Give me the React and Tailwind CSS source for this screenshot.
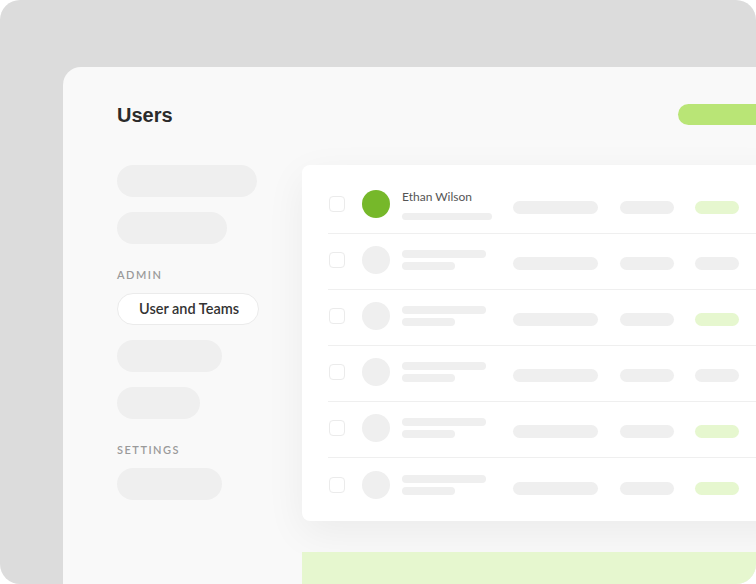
const rows = [
  { name: 'Ethan Wilson', active: true, status: 'green' },
  { status: 'gray' },
  { status: 'green' },
  { status: 'gray' },
  { status: 'green' },
  { status: 'green' },
];

function Pill({ w }) {
  return <div className={`h-[32px] rounded-full bg-[#efefef] ${w}`} />;
}

function Label({ children }) {
  return (
    <div className="mt-[23px] mb-[10px] h-[16px] text-[11px] leading-[16px] font-semibold tracking-[1.5px] text-[#9a9a9a]">
      {children}
    </div>
  );
}

function Row({ row, last }) {
  return (
    <div className={`flex items-center h-[56px] pb-[3px] ${last ? '' : 'border-b border-[#efefef]'}`}>
      <div className="ml-[1px] w-[16px] h-[16px] rounded-[4px] border border-[#ebebeb] bg-white shrink-0" />
      <div
        className={`ml-[17px] w-[28px] h-[28px] rounded-full shrink-0 ${row.active ? 'bg-[#76b82a]' : 'bg-[#efefef]'}`}
      />
      <div className="ml-[12px] w-[111px] shrink-0">
        {row.name ? (
          <>
            <div className="text-[12px] leading-[16px] text-[#555]">{row.name}</div>
            <div className="mt-[8px] w-[90px] h-[7px] rounded-full bg-[#efefef]" />
          </>
        ) : (
          <>
            <div className="w-[84px] h-[8px] rounded-full bg-[#efefef]" />
            <div className="mt-[4px] w-[53px] h-[8px] rounded-full bg-[#efefef]" />
          </>
        )}
      </div>
      <div className="flex items-center mt-[7px]">
        <div className="w-[85px] h-[13px] rounded-full bg-[#efefef]" />
        <div className="ml-[22px] w-[54px] h-[13px] rounded-full bg-[#efefef]" />
        <div
          className={`ml-[21px] w-[44px] h-[13px] rounded-full ${row.status === 'green' ? 'bg-[#e6f7cf]' : 'bg-[#efefef]'}`}
        />
      </div>
    </div>
  );
}

export default function App() {
  return (
    <div
      className="w-[756px] h-[584px] bg-[#dcdcdc] rounded-[20px] overflow-hidden flex pl-[63px] pt-[67px]"
      style={{ fontFamily: 'Lato, "Noto Sans", sans-serif' }}
    >
      <div className="flex-1 bg-[#f9f9f9] rounded-tl-[18px] pl-[54px] pt-[34px]">
        {/* header */}
        <div className="flex items-center justify-between h-[28px]">
          <h1
            className="text-[20px] leading-[28px] font-bold text-[#2b2b2b]"
            style={{ fontFamily: '"Liberation Sans", Arial, sans-serif' }}
          >
            Users
          </h1>
          <div className="w-[108px] h-[21px] rounded-full bg-[#b9e576] -mr-[30px] -mt-[1px]" />
        </div>

        <div className="flex mt-[36px]">
          {/* sidebar */}
          <div className="w-[185px] shrink-0 flex flex-col">
            <Pill w="w-[140px]" />
            <div className="mt-[15px]"><Pill w="w-[110px]" /></div>
            <Label>ADMIN</Label>
            <div className="w-[142px] h-[32px] rounded-full bg-white border border-[#ebebeb] flex items-center pl-[21px] text-[14.5px] font-semibold text-[#333]">
              User and Teams
            </div>
            <div className="mt-[15px]"><Pill w="w-[105px]" /></div>
            <div className="mt-[15px]"><Pill w="w-[83px]" /></div>
            <Label>SETTINGS</Label>
            <Pill w="w-[105px]" />
          </div>

          {/* main */}
          <div className="flex-1 min-w-0">
            <div className="bg-white rounded-[8px] -mr-[40px] px-[26px] pt-[13px] pb-[7px] shadow-[0_12px_40px_rgba(0,0,0,0.06)]">
              {rows.map((r, i) => (
                <Row key={i} row={r} last={i === rows.length - 1} />
              ))}
            </div>
            <div className="mt-[31px] h-[40px] bg-[#e6f7cf] -mr-[40px]" />
          </div>
        </div>
      </div>
    </div>
  );
}
